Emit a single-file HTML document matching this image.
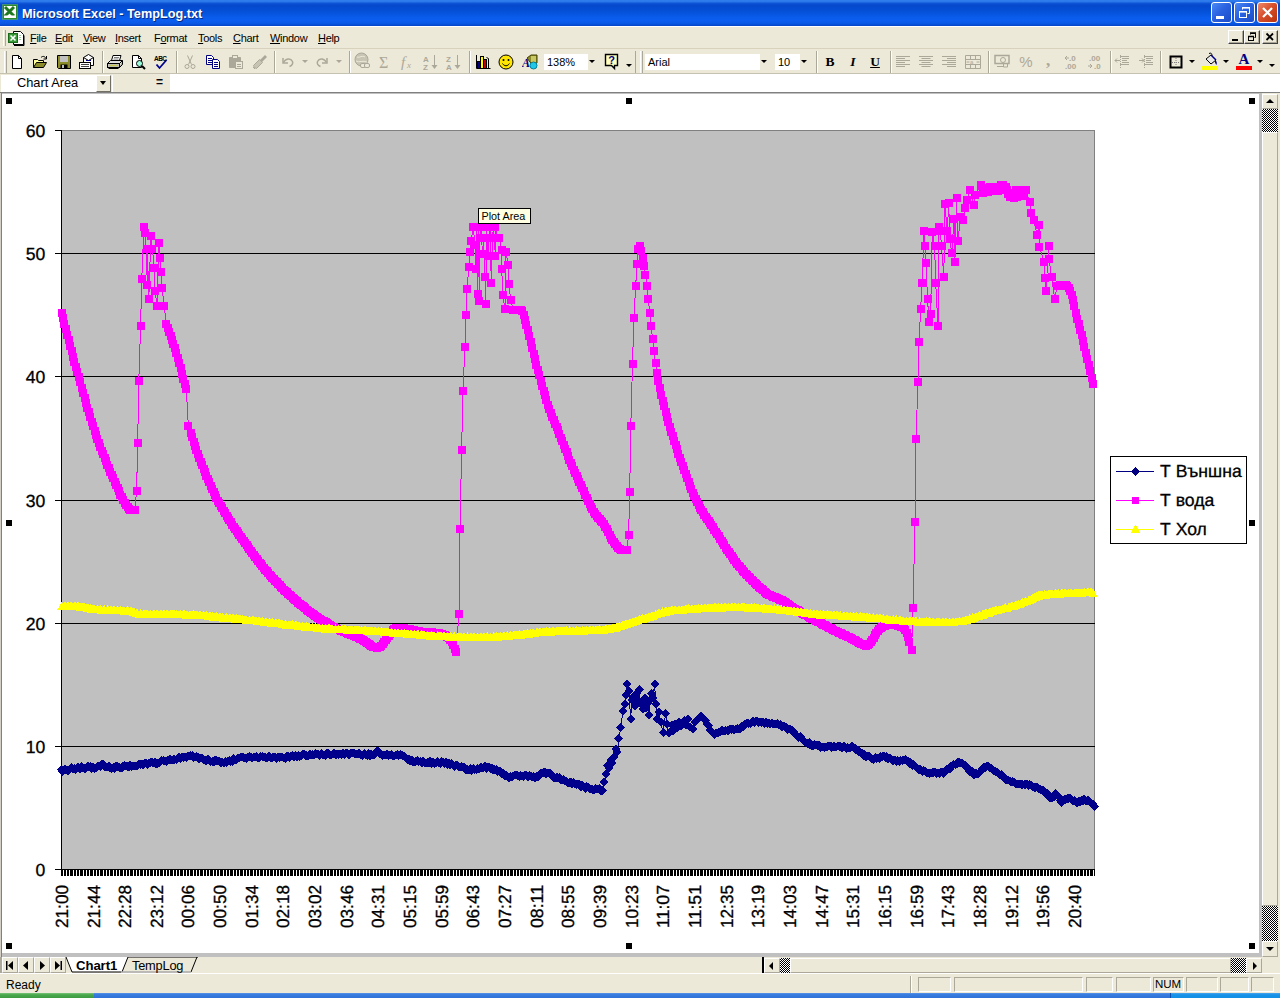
<!DOCTYPE html>
<html lang="en"><head><meta charset="utf-8"><title>Microsoft Excel - TempLog.txt</title>
<style>
*{box-sizing:border-box;margin:0;padding:0}
html,body{width:1280px;height:998px;overflow:hidden;background:#ece9d8}
body{position:relative;font-family:"Liberation Sans",Arial,sans-serif;font-size:11px;color:#000}
.abs{position:absolute}
#title{left:0;top:0;width:1280px;height:26px;background:linear-gradient(to bottom,#2f7fee 0,#2c78ea 6%,#0a50d4 14%,#0548cc 22%,#0450d6 42%,#0a5cec 68%,#0b5ef0 80%,#0a58e4 90%,#0646c6 100%)}
#title .t{left:22px;top:6px;color:#fff;font-weight:bold;font-size:12.7px;line-height:17px;white-space:nowrap;text-shadow:1px 1px 0 #0a2a80;letter-spacing:0}
.wb{top:2px;width:21px;height:21px;border:1px solid #fff;border-radius:3px;background:linear-gradient(135deg,#4a8af6 0,#2a62e0 45%,#1c4cc8 100%)}
.wb.x{background:linear-gradient(135deg,#ec8a6c 0,#d8502c 45%,#b8330f 100%)}
#menu{left:0;top:26px;width:1280px;height:22px;background:#ece9d8;border-top:1px solid #fff}
#menu span{position:absolute;top:5px;font-size:11px;line-height:13px;white-space:nowrap;letter-spacing:-.3px}
#menu u{text-decoration:underline;text-underline-offset:1px}
.mdi{top:30px;width:16px;height:14px;background:#ece9d8;border:1px solid;border-color:#fff #404040 #404040 #fff;box-shadow:inset -1px -1px 0 #aca899}
#tb{left:0;top:48px;width:1280px;height:26px;background:#ece9d8;border-top:1px solid #d8d2bd;border-bottom:1px solid #c5c2b2}
.sep{top:51px;width:2px;height:22px;border-left:1px solid #aca899;border-right:1px solid #fff}
.grip{top:51px;width:3px;height:22px;border-left:1px solid #fff;border-right:1px solid #aca899}
.ic{top:54px;width:16px;height:16px}
.box{top:54px;height:16px;background:#fff;font-size:11px;line-height:16px;padding-left:3px;white-space:nowrap}
.dd{width:0;height:0;border-left:3px solid transparent;border-right:3px solid transparent;border-top:3px solid #000}
#fb{left:0;top:74px;width:1280px;height:19px;background:#fff;border-bottom:1px solid #808080}
#chartwin{left:0;top:93px;width:1262px;height:864px;background:#c0c0c0}
#chartbg{left:2px;top:94px;width:1257px;height:859px;background:#fff}
#vs{left:1262px;top:93px;width:18px;height:864px;background:#ece9d8}
.chk{background-color:#fff;background-image:linear-gradient(45deg,#000 25%,transparent 25%,transparent 75%,#000 75%),linear-gradient(45deg,#000 25%,transparent 25%,transparent 75%,#000 75%);background-size:2px 2px;background-position:0 0,1px 1px}
.btn3{background:#ece9d8;border:1px solid;border-color:#fff #aca899 #aca899 #fff}
#tabs{left:0;top:957px;width:1280px;height:16px;background:#ece9d8}
#status{left:0;top:973px;width:1280px;height:21px;background:#ece9d8;border-top:1px solid #fff}
.pane{top:977px;height:15px;border:1px solid;border-color:#aca899 #fff #fff #aca899}
#task{left:0;top:993px;width:1280px;height:5px;background:linear-gradient(to bottom,#5b93e6 0,#3a7de0 30%,#2f71d6 100%)}
</style></head><body>
<div id="title" class="abs">
<svg class="abs" style="left:2px;top:4px" width="16" height="16" viewBox="0 0 16 16"><rect x=".5" y=".5" width="15" height="15" fill="#2d8a2d" stroke="#6db36d" stroke-dasharray="1 1"/><rect x="2" y="2" width="12" height="12" fill="#fff"/><path d="M3 3l9 9M12 3l-9 9" stroke="#1f7a1f" stroke-width="3"/><rect x="3" y="11.5" width="10" height="2" fill="#fff"/></svg>
<div class="abs t">Microsoft Excel - TempLog.txt</div>
<div class="abs wb" style="left:1211px"><div class="abs" style="left:4px;top:13px;width:8px;height:3px;background:#fff"></div></div>
<div class="abs wb" style="left:1234px"><svg class="abs" style="left:3px;top:3px" width="13" height="13" viewBox="0 0 13 13" fill="none" stroke="#fff"><path d="M4.5 3.5v-2h7v6h-2" stroke-width="1"/><path d="M4 1.8h8" stroke-width="1.6"/><rect x="1.5" y="5.5" width="7" height="6"/><path d="M1 5.8h8" stroke-width="1.6"/></svg></div>
<div class="abs wb x" style="left:1257px"><svg class="abs" style="left:3px;top:3px" width="13" height="13" viewBox="0 0 13 13"><path d="M2 2l9 9M11 2l-9 9" stroke="#fff" stroke-width="2.2"/></svg></div>
</div>
<div id="menu" class="abs">
<div class="abs grip" style="left:3px;top:3px;height:16px"></div>
<svg class="abs" style="left:8px;top:2px" width="17" height="17" viewBox="0 0 17 17"><path d="M5.500 2.500h7l3 3v10h-10z" fill="#fff" stroke="#000"/><path d="M6 16.500h10v-10" stroke="#000" stroke-width="1" fill="none"/><rect x=".5" y="4.500" width="9" height="9" fill="#3a9a3a" stroke="#1a6a1a"/><path d="M2.500 6.500l5 5M7.500 6.500l-5 5" stroke="#fff" stroke-width="1.600"/><path d="M11 6.500h2M11 8.500h2M11 10.500h2" stroke="#9c9"/></svg>
<span style="left:30px"><u>F</u>ile</span><span style="left:55px"><u>E</u>dit</span><span style="left:83px"><u>V</u>iew</span><span style="left:115px"><u>I</u>nsert</span><span style="left:154px">F<u>o</u>rmat</span><span style="left:198px"><u>T</u>ools</span><span style="left:233px"><u>C</u>hart</span><span style="left:270px"><u>W</u>indow</span><span style="left:318px"><u>H</u>elp</span>
</div>
<div class="abs mdi" style="left:1228px"><div class="abs" style="left:3px;top:8px;width:6px;height:2px;background:#000"></div></div>
<div class="abs mdi" style="left:1244px"><svg class="abs" style="left:1px;top:0" width="12" height="12" viewBox="0 0 12 12" fill="none" stroke="#000"><path d="M4.500 3.500v-1h5v4h-1"/><path d="M4 2h6" stroke-width="1.500"/><rect x="2.500" y="5.500" width="5" height="4"/><path d="M2 5.500h6" stroke-width="1.500"/></svg></div>
<div class="abs mdi" style="left:1262px"><svg class="abs" style="left:2px;top:1px" width="10" height="10" viewBox="0 0 10 10"><path d="M1.500 1.500l6.500 6.500M8 1.500l-6.500 6.500" stroke="#000" stroke-width="1.800"/></svg></div>
<div id="tb" class="abs"></div>
<div class="abs grip" style="left:4px"></div>
<!-- new -->
<svg class="abs ic" style="left:9px" viewBox="0 0 16 16"><path d="M3.500 1.500h6l3 3v10h-9z" fill="#fff" stroke="#000"/><path d="M9.500 1.500v3h3" fill="none" stroke="#000"/></svg>
<!-- open -->
<svg class="abs ic" style="left:32px" viewBox="0 0 16 16"><path d="M1.500 13.500v-8h4l1 1h5v2" fill="#ffff9c" stroke="#000"/><path d="M1.500 13.500l3-5h10l-3 5z" fill="#8c8c2a" stroke="#000"/><path d="M9 3.500c2-2 4-1 5 1M14.500 2v3h-3" fill="none" stroke="#000"/></svg>
<!-- save -->
<svg class="abs ic" style="left:56px" viewBox="0 0 16 16"><path d="M1.500 1.500h13v13h-12l-1-1z" fill="#8c8c2a" stroke="#000"/><rect x="4" y="2" width="8" height="6" fill="#c0c0c0"/><rect x="4.500" y="10.500" width="7" height="4" fill="#000"/><rect x="6" y="11" width="2" height="3" fill="#c0c0c0"/></svg>
<!-- mail -->
<svg class="abs ic" style="left:78px;width:18px" viewBox="0 0 18 16"><path d="M5.500 8.500v-5l5-3 5 3v8h-4" fill="#fff" stroke="#000"/><path d="M5.500 3.500l5 3 5-3" fill="none" stroke="#000"/><path d="M8 6.500h5" stroke="#000080"/><rect x="1.500" y="8.500" width="11" height="6" fill="#fff" stroke="#000"/><path d="M3 10.500h8M3 12.500h8" stroke="#404040"/></svg>
<div class="abs sep" style="left:102px"></div>
<!-- print -->
<svg class="abs ic" style="left:106px;width:18px" viewBox="0 0 18 16"><path d="M5.500 6.500l1.500-5h8l-1.500 5" fill="#fff" stroke="#000"/><path d="M8 3.500h5M7.500 5h5" stroke="#808080"/><path d="M1.500 9.500l3-3h12l-3 3z" fill="#e0e0e0" stroke="#000"/><rect x="1.500" y="9.500" width="12" height="4" fill="#c0c0c0" stroke="#000"/><path d="M13.500 13.500l3-3v-4" fill="#a0a0a0" stroke="#000"/><path d="M3 11.500h9" stroke="#c8c850" stroke-width="1.500"/><path d="M2.500 14.500h10" stroke="#000"/></svg>
<!-- preview -->
<svg class="abs ic" style="left:130px" viewBox="0 0 16 16"><path d="M2.500 1.500h6l3 3v9h-9z" fill="#fff" stroke="#000"/><path d="M8.500 1.500v3h3" fill="none" stroke="#000"/><circle cx="9.500" cy="9.500" r="3" fill="#9fd" stroke="#000"/><path d="M12 12l3 3" stroke="#000" stroke-width="2"/></svg>
<!-- spell -->
<svg class="abs ic" style="left:153px" viewBox="0 0 16 16"><text x="1" y="6.500" font-family="Liberation Sans,Arial,sans-serif" font-size="6.500" font-weight="bold" fill="#000" textLength="13">ABC</text><path d="M3.500 10.500l3 3.500 7-8" fill="none" stroke="#00008b" stroke-width="1.800"/></svg>
<div class="abs sep" style="left:176px"></div>
<!-- cut (disabled) -->
<svg class="abs ic" style="left:182px" viewBox="0 0 16 16" fill="none" stroke="#aca899"><path d="M5.500 1.500l4 9M10.500 1.500l-4 9"/><circle cx="5" cy="12.500" r="2"/><circle cx="11" cy="12.500" r="2"/></svg>
<!-- copy -->
<svg class="abs ic" style="left:205px" viewBox="0 0 16 16"><path d="M1.500 1.500h5l2 2v7h-7z" fill="#fff" stroke="#000080"/><path d="M3 4.500h4M3 6.500h4M3 8.500h4" stroke="#000080"/><path d="M7.500 5.500h5l2 2v7h-7z" fill="#fff" stroke="#000080"/><path d="M9 8.500h4M9 10.500h4M9 12.500h4" stroke="#000080"/></svg>
<!-- paste (disabled) -->
<svg class="abs ic" style="left:228px" viewBox="0 0 16 16"><path d="M1.500 3.500h11v10h-11z" fill="#aca899" stroke="#aca899"/><rect x="4.500" y="1.500" width="5" height="3" fill="#ece9d8" stroke="#aca899"/><rect x="7.500" y="7.500" width="7" height="7" fill="#ece9d8" stroke="#aca899"/><path d="M9 10.500h4M9 12.500h4" stroke="#aca899"/></svg>
<!-- painter (disabled) -->
<svg class="abs ic" style="left:251px" viewBox="0 0 16 16"><path d="M14 1l-5 5 2 2 5-5z" fill="#aca899"/><path d="M8.500 5.500l3 3-6 6-2-1-1-2z" fill="#c8c4b4" stroke="#aca899"/><path d="M2 13l2 2" stroke="#aca899"/></svg>
<div class="abs sep" style="left:274px"></div>
<!-- undo -->
<svg class="abs ic" style="left:280px" viewBox="0 0 16 16" fill="none" stroke="#aca899" stroke-width="1.500"><path d="M3 4v5h5"/><path d="M3.500 8.500c2-4 7-5 9-1 .8 2-.5 4-3 5"/></svg>
<div class="abs dd" style="left:302px;top:60px;border-top-color:#aca899"></div>
<!-- redo -->
<svg class="abs ic" style="left:314px" viewBox="0 0 16 16" fill="none" stroke="#aca899" stroke-width="1.500"><path d="M13 4v5h-5"/><path d="M12.500 8.500c-2-4-7-5-9-1-.8 2 .5 4 3 5"/></svg>
<div class="abs dd" style="left:336px;top:60px;border-top-color:#aca899"></div>
<div class="abs sep" style="left:349px"></div>
<!-- hyperlink -->
<svg class="abs ic" style="left:354px;width:18px;height:18px;top:52px" viewBox="0 0 18 18"><circle cx="7.500" cy="7.500" r="6.500" fill="#c8c4b4" stroke="#aca899"/><path d="M3 5c3 1 5-2 8 0M2 9c3 2 7-1 11 1" stroke="#ece9d8" fill="none"/><rect x="6.500" y="11.500" width="5" height="4" rx="1.500" fill="#ece9d8" stroke="#aca899"/><rect x="10.500" y="11.500" width="5" height="4" rx="1.500" fill="#ece9d8" stroke="#aca899"/></svg>
<!-- sigma -->
<svg class="abs ic" style="left:377px" viewBox="0 0 16 16"><text x="2" y="14" font-family="Liberation Serif,serif" font-size="16" fill="#aca899">Σ</text></svg>
<!-- fx -->
<svg class="abs ic" style="left:400px" viewBox="0 0 16 16"><text x="1" y="13" font-family="Liberation Serif,serif" font-style="italic" font-size="15" fill="#aca899">f</text><text x="7" y="14" font-family="Liberation Serif,serif" font-style="italic" font-size="9" fill="#aca899">x</text></svg>
<!-- sort asc -->
<svg class="abs ic" style="left:423px" viewBox="0 0 16 16"><text x="0" y="7.500" font-family="Liberation Sans,Arial,sans-serif" font-size="8" font-weight="bold" fill="#aca899">A</text><text x="0" y="15.500" font-family="Liberation Sans,Arial,sans-serif" font-size="8" font-weight="bold" fill="#aca899">Z</text><path d="M11.500 1v11" stroke="#aca899"/><path d="M8.500 11h6l-3 4z" fill="#aca899"/></svg>
<!-- sort desc -->
<svg class="abs ic" style="left:446px" viewBox="0 0 16 16"><text x="0" y="7.500" font-family="Liberation Sans,Arial,sans-serif" font-size="8" font-weight="bold" fill="#aca899">Z</text><text x="0" y="15.500" font-family="Liberation Sans,Arial,sans-serif" font-size="8" font-weight="bold" fill="#aca899">A</text><path d="M11.500 1v11" stroke="#aca899"/><path d="M8.500 11h6l-3 4z" fill="#aca899"/></svg>
<div class="abs sep" style="left:469px"></div>
<!-- chart wizard -->
<svg class="abs ic" style="left:475px" viewBox="0 0 16 16"><path d="M1.500 1v13.500h14" fill="none" stroke="#000"/><rect x="2.500" y="7.500" width="3" height="7" fill="#000080" stroke="#000"/><rect x="5.500" y="2.500" width="3" height="12" fill="#ffff00" stroke="#000"/><rect x="8.500" y="5.500" width="3" height="9" fill="#c00000" stroke="#000"/><path d="M11.500 3.500l2 1v10" stroke="#000" fill="none"/></svg>
<!-- smiley -->
<svg class="abs ic" style="left:498px" viewBox="0 0 16 16"><circle cx="8" cy="8" r="7" fill="#ffe600" stroke="#000"/><circle cx="5.500" cy="6" r="1" fill="#000"/><circle cx="10.500" cy="6" r="1" fill="#000"/><path d="M4.500 9.500c2 3 5 3 7 0" fill="none" stroke="#000"/></svg>
<!-- drawing -->
<svg class="abs ic" style="left:522px;width:18px" viewBox="0 0 18 16"><path d="M5 4l4-3h6v8l-4 3z" fill="#8c8c2a" stroke="#404000"/><rect x="9" y="2" width="5" height="6" fill="#c8c864"/><circle cx="11.500" cy="11.500" r="3.500" fill="#20c8e8" stroke="#0080a0"/><text x="0" y="13" font-family="Liberation Serif,serif" font-size="12" font-style="italic" font-weight="bold" fill="#000080">A</text></svg>
<div class="abs box" style="left:544px;width:45px">138%</div>
<div class="abs" style="left:588px;top:52px;width:11px;height:19px;background:#ece9d8"></div>
<div class="abs dd" style="left:589px;top:60px"></div>
<!-- help -->
<svg class="abs ic" style="left:604px;width:17px;height:18px;top:53px" viewBox="0 0 17 18"><path d="M1.500 1.500h12v11h-3v3l-3-3h-6z" fill="#ffffc0" stroke="#000" stroke-width="1.400"/><text x="4.200" y="11" font-family="Liberation Sans,Arial,sans-serif" font-size="11" font-weight="bold" fill="#000080">?</text></svg>
<div class="abs dd" style="left:626px;top:64px"></div>
<div class="abs sep" style="left:635px;border-right:0"></div>
<div class="abs grip" style="left:640px"></div>
<div class="abs box" style="left:645px;width:115px">Arial</div>
<div class="abs dd" style="left:761px;top:60px"></div>
<div class="abs box" style="left:775px;width:25px">10</div>
<div class="abs dd" style="left:801px;top:60px"></div>
<div class="abs sep" style="left:816px"></div>
<div class="abs" style="left:823px;top:53px;width:14px;font:bold 13.5px/18px 'Liberation Serif',serif;text-align:center">B</div>
<div class="abs" style="left:846px;top:53px;width:14px;font:italic bold 13.5px/18px 'Liberation Serif',serif;text-align:center">I</div>
<div class="abs" style="left:868px;top:53px;width:14px;font:bold 13.5px/17px 'Liberation Serif',serif;text-align:center;text-decoration:underline">U</div>
<div class="abs sep" style="left:890px"></div>
<svg class="abs ic" style="left:895px" viewBox="0 0 16 16" stroke="#aca899"><path d="M1 2.500h14M1 4.500h9M1 6.500h14M1 8.500h9M1 10.500h14M1 12.500h9"/></svg>
<svg class="abs ic" style="left:918px" viewBox="0 0 16 16" stroke="#aca899"><path d="M1 2.500h14M3.500 4.500h9M1 6.500h14M3.500 8.500h9M1 10.500h14M3.500 12.500h9"/></svg>
<svg class="abs ic" style="left:941px" viewBox="0 0 16 16" stroke="#aca899"><path d="M1 2.500h14M6 4.500h9M1 6.500h14M6 8.500h9M1 10.500h14M6 12.500h9"/></svg>
<svg class="abs ic" style="left:965px" viewBox="0 0 16 16" fill="none" stroke="#aca899"><path d="M.5 1.500h15v13h-15zM.5 5.500h15M.5 10.500h15M5.500 1.500v4M10.500 1.500v4M5.500 10.500v4M10.500 10.500v4"/><text x="5" y="10" font-family="Liberation Sans,Arial,sans-serif" font-size="6" fill="#aca899" stroke="none">a</text><path d="M1.500 8h3M11.500 8h3"/></svg>
<div class="abs sep" style="left:988px"></div>
<svg class="abs ic" style="left:994px" viewBox="0 0 16 16" fill="none" stroke="#aca899"><rect x="1" y="1.500" width="14" height="8" stroke-width="1.500"/><circle cx="9" cy="6" r="2.500"/><path d="M3 12.500h6M9.500 9v4h4v-3"/></svg>
<div class="abs" style="left:1018px;top:52px;width:16px;font:15px/19px 'Liberation Sans',Arial,sans-serif;color:#aca899;text-align:center">%</div>
<div class="abs" style="left:1041px;top:51px;width:14px;font:bold 17px/19px 'Liberation Serif',serif;color:#aca899;text-align:center">,</div>
<svg class="abs ic" style="left:1064px" viewBox="0 0 16 16"><text x="5" y="7" font-family="Liberation Sans,Arial,sans-serif" font-size="8" font-weight="bold" fill="#aca899">.0</text><text x="1" y="15" font-family="Liberation Sans,Arial,sans-serif" font-size="8" font-weight="bold" fill="#aca899">.00</text><path d="M1 4h4M1 4l2-2M1 4l2 2" stroke="#aca899" fill="none"/></svg>
<svg class="abs ic" style="left:1087px" viewBox="0 0 16 16"><text x="2" y="7" font-family="Liberation Sans,Arial,sans-serif" font-size="8" font-weight="bold" fill="#aca899">.00</text><text x="7" y="15" font-family="Liberation Sans,Arial,sans-serif" font-size="8" font-weight="bold" fill="#aca899">.0</text><path d="M1 12h4M5 12l-2-2M5 12l-2 2" stroke="#aca899" fill="none"/></svg>
<div class="abs sep" style="left:1110px"></div>
<svg class="abs ic" style="left:1114px" viewBox="0 0 16 16" stroke="#aca899" fill="none"><path d="M6 2.500h9M8 4.500h7M8 6.500h5M8 8.500h7M6 10.500h9"/><path d="M1 6.500h5M1 6.500l2-2M1 6.500l2 2"/><path d="M6.500 1v14" stroke-dasharray="1 1"/></svg>
<svg class="abs ic" style="left:1138px" viewBox="0 0 16 16" stroke="#aca899" fill="none"><path d="M6 2.500h9M8 4.500h7M8 6.500h5M8 8.500h7M6 10.500h9"/><path d="M1 6.500h5M6 6.500l-2-2M6 6.500l-2 2"/><path d="M6.500 1v14" stroke-dasharray="1 1"/></svg>
<div class="abs sep" style="left:1160px"></div>
<svg class="abs ic" style="left:1169px" viewBox="0 0 16 16" fill="none"><rect x="1.500" y="2.500" width="11" height="11" stroke="#000" stroke-width="2"/><path d="M7 4v9M3 8.500h9" stroke="#808080" stroke-dasharray="1 1"/></svg>
<div class="abs dd" style="left:1189px;top:60px"></div>
<svg class="abs ic" style="left:1201px;top:52px;height:19px;width:18px" viewBox="0 0 18 19"><path d="M5 7l5-4 5 5-5 4z" fill="#e8e8e8" stroke="#000"/><path d="M8 1.500c2-1 3 0 3 2.500" fill="none" stroke="#000"/><path d="M14 8c2 1 2 3 1.500 5-1-1-2-3-1.500-5z" fill="#000080"/><path d="M10 3l5 5" stroke="#000080" stroke-width="1.500"/><rect x="1" y="14" width="16" height="4" fill="#ffff00"/></svg>
<div class="abs dd" style="left:1223px;top:60px"></div>
<div class="abs" style="left:1236px;top:51px;width:16px;font:bold 15px/17px 'Liberation Serif',serif;color:#000080;text-align:center">A</div>
<div class="abs" style="left:1236px;top:66px;width:16px;height:4px;background:#f00"></div>
<div class="abs dd" style="left:1257px;top:60px"></div>
<div class="abs dd" style="left:1269px;top:64px"></div>
<!-- formula bar -->
<div id="fb" class="abs"></div>
<div class="abs" style="left:0;top:74px;width:170px;height:19px;background:#ece9d8;border-bottom:1px solid #808080"></div>
<div class="abs" style="left:1px;top:75px;width:95px;height:17px;background:#fff;font:12.8px/16px 'Liberation Sans',Arial,sans-serif;padding-left:16px;white-space:nowrap">Chart Area</div>
<div class="abs btn3" style="left:96px;top:75px;width:15px;height:17px;border-color:#fff #716f64 #716f64 #fff"><div class="abs dd" style="left:3px;top:5px;border-width:4px 4px 0 4px;border-left-width:3.500px;border-right-width:3.500px"></div></div>
<div class="abs" style="left:112px;top:75px;width:1px;height:17px;background:#fff"></div>
<div class="abs" style="left:156px;top:74px;font:bold 12px/17px 'Liberation Sans',Arial,sans-serif">=</div>
<div id="chartwin" class="abs"></div>
<div class="abs" style="left:0;top:93px;width:1px;height:864px;background:#d4d0c8"></div><div class="abs" style="left:1px;top:93px;width:1px;height:864px;background:#808080"></div>
<div id="chartbg" class="abs"></div>
<svg id="chart" width="1257" height="859" viewBox="2 94 1257 859" style="position:absolute;left:2px;top:94px" shape-rendering="crispEdges">
<defs>
<marker id="mD" markerWidth="10" markerHeight="10" refX="5" refY="5" markerUnits="userSpaceOnUse"><path d="M5 0.5 L9.5 5 L5 9.5 L0.5 5Z" fill="#00008c"/></marker>
<marker id="mS" markerWidth="8" markerHeight="8" refX="4" refY="4" markerUnits="userSpaceOnUse"><rect x="0" y="0" width="8" height="8" fill="#ff00ff"/></marker>
<marker id="mT" markerWidth="10" markerHeight="10" refX="5" refY="5" markerUnits="userSpaceOnUse"><path d="M5 0.8 L9.3 9 L0.7 9Z" fill="#ffff00"/></marker>
<pattern id="tk" width="10" height="7" patternUnits="userSpaceOnUse" x="61"><rect x="0" y="0" width="2" height="7" fill="#000"/><rect x="3" y="0" width="2" height="7" fill="#000"/><rect x="6" y="0" width="2" height="7" fill="#000"/><rect x="9" y="0" width="1" height="7" fill="#000"/></pattern>
</defs>
<rect x="62" y="130" width="1033" height="739" fill="#c0c0c0"/>
<path d="M61.5 130.5H1094.5V869" fill="none" stroke="#808080" stroke-width="1"/>
<rect x="62" y="253" width="1033" height="1" fill="#000"/>
<rect x="62" y="376" width="1033" height="1" fill="#000"/>
<rect x="62" y="500" width="1033" height="1" fill="#000"/>
<rect x="62" y="623" width="1033" height="1" fill="#000"/>
<rect x="62" y="746" width="1033" height="1" fill="#000"/>
<rect x="61" y="130" width="1" height="740" fill="#000"/>
<rect x="55" y="869" width="1040" height="1" fill="#000"/>
<rect x="55" y="130" width="6" height="1" fill="#000"/>
<rect x="55" y="253" width="6" height="1" fill="#000"/>
<rect x="55" y="376" width="6" height="1" fill="#000"/>
<rect x="55" y="500" width="6" height="1" fill="#000"/>
<rect x="55" y="623" width="6" height="1" fill="#000"/>
<rect x="55" y="746" width="6" height="1" fill="#000"/>
<rect x="61" y="870" width="1034" height="6" fill="url(#tk)"/>
<polyline fill="none" stroke="#00008c" stroke-width="1" marker-start="url(#mD)" marker-mid="url(#mD)" marker-end="url(#mD)" points="61.5,769.6 62.9,771.6 64.4,769.4 65.8,769.5 67.2,770.5 68.7,770.3 70.1,769.0 71.5,767.8 73.0,768.6 74.4,768.2 75.8,769.4 77.3,767.4 78.7,767.7 80.2,769.0 81.6,766.7 83.0,767.7 84.5,768.7 85.9,768.5 87.3,766.6 88.8,766.6 90.2,766.6 91.6,768.8 93.1,766.9 94.5,768.1 95.9,768.3 97.4,766.7 98.8,766.0 100.2,766.4 101.7,764.4 103.1,764.0 104.5,767.0 106.0,767.0 107.4,766.9 108.8,766.2 110.3,768.1 111.7,768.4 113.1,767.6 114.6,768.3 116.0,765.8 117.5,766.3 118.9,766.8 120.3,767.9 121.8,767.8 123.2,766.2 124.6,765.7 126.1,766.0 127.5,766.1 128.9,767.0 130.4,765.0 131.8,766.4 133.2,766.1 134.7,766.2 136.1,765.9 137.5,765.3 139.0,764.4 140.4,764.2 141.8,764.1 143.3,765.0 144.7,763.0 146.1,763.1 147.6,764.4 149.0,762.9 150.5,762.2 151.9,761.9 153.3,763.1 154.8,762.3 156.2,763.8 157.6,763.3 159.1,763.4 160.5,761.3 161.9,760.6 163.4,760.4 164.8,761.2 166.2,761.4 167.7,760.4 169.1,759.5 170.5,759.7 172.0,759.9 173.4,759.7 174.8,759.6 176.3,759.5 177.7,758.7 179.1,757.0 180.6,758.6 182.0,756.9 183.4,757.4 184.9,756.7 186.3,757.5 187.8,755.9 189.2,755.9 190.6,755.9 192.1,755.6 193.5,757.6 194.9,756.9 196.4,756.5 197.8,757.0 199.2,759.0 200.7,758.1 202.1,757.8 203.5,759.7 205.0,759.7 206.4,761.0 207.8,758.9 209.3,760.2 210.7,761.3 212.1,761.6 213.6,762.1 215.0,760.1 216.4,760.9 217.9,760.7 219.3,761.0 220.8,763.2 222.2,762.2 223.6,763.1 225.1,761.6 226.5,762.6 227.9,761.3 229.4,760.4 230.8,761.4 232.2,761.4 233.7,758.8 235.1,759.7 236.5,759.3 238.0,757.9 239.4,758.0 240.8,757.2 242.3,757.2 243.7,757.3 245.1,758.2 246.6,758.2 248.0,757.0 249.4,756.5 250.9,757.3 252.3,758.2 253.7,756.9 255.2,757.2 256.6,756.9 258.1,758.4 259.5,757.8 260.9,756.5 262.4,756.6 263.8,757.3 265.2,757.7 266.7,758.0 268.1,756.5 269.5,756.7 271.0,758.1 272.4,757.3 273.8,757.0 275.3,757.0 276.7,758.6 278.1,756.9 279.6,757.5 281.0,756.9 282.4,757.0 283.9,758.1 285.3,758.3 286.7,756.5 288.2,756.0 289.6,757.3 291.1,755.8 292.5,755.1 293.9,757.3 295.4,755.9 296.8,756.8 298.2,755.6 299.7,756.8 301.1,755.5 302.5,754.6 304.0,754.1 305.4,755.4 306.8,755.6 308.3,756.2 309.7,753.9 311.1,755.3 312.6,754.5 314.0,754.8 315.4,753.8 316.9,754.1 318.3,754.6 319.7,755.6 321.2,753.4 322.6,754.4 324.1,755.1 325.5,755.5 326.9,753.4 328.4,753.2 329.8,755.2 331.2,755.3 332.7,753.9 334.1,752.8 335.5,755.0 337.0,753.6 338.4,754.9 339.8,754.1 341.3,754.6 342.7,752.9 344.1,754.5 345.6,753.0 347.0,753.5 348.4,754.6 349.9,754.6 351.3,752.9 352.7,753.1 354.2,753.6 355.6,754.0 357.0,753.7 358.5,753.2 359.9,753.6 361.4,755.0 362.8,755.5 364.2,753.4 365.7,754.9 367.1,755.5 368.5,753.7 370.0,755.8 371.4,754.0 372.8,755.3 374.3,754.5 375.7,753.1 377.1,751.1 378.6,751.8 380.0,753.7 381.4,754.6 382.9,755.5 384.3,755.0 385.7,755.1 387.2,754.0 388.6,755.6 390.0,755.3 391.5,754.7 392.9,756.1 394.4,756.1 395.8,755.3 397.2,754.7 398.7,755.5 400.1,754.6 401.5,755.0 403.0,756.4 404.4,756.4 405.8,758.3 407.3,759.4 408.7,759.0 410.1,761.2 411.6,760.0 413.0,761.9 414.4,762.1 415.9,761.6 417.3,760.5 418.7,761.8 420.2,761.5 421.6,763.1 423.0,761.0 424.5,762.9 425.9,763.3 427.3,762.7 428.8,762.9 430.2,761.3 431.7,763.4 433.1,762.2 434.5,763.4 436.0,763.4 437.4,761.5 438.8,763.2 440.3,763.6 441.7,761.4 443.1,762.3 444.6,763.6 446.0,762.3 447.4,764.5 448.9,763.2 450.3,765.0 451.7,763.7 453.2,765.0 454.6,766.6 456.0,765.2 457.5,765.8 458.9,766.9 460.3,766.9 461.8,766.6 463.2,767.3 464.7,767.7 466.1,770.0 467.5,769.6 469.0,770.4 470.4,768.7 471.8,770.4 473.3,768.7 474.7,769.6 476.1,769.5 477.6,768.3 479.0,769.1 480.4,767.8 481.9,767.5 483.3,768.0 484.7,766.0 486.2,768.4 487.6,767.7 489.0,767.4 490.5,768.8 491.9,767.8 493.3,770.2 494.8,769.6 496.2,769.6 497.6,771.3 499.1,771.3 500.5,771.6 502.0,774.0 503.4,773.1 504.8,776.0 506.3,775.2 507.7,776.8 509.1,777.9 510.6,776.9 512.0,777.1 513.4,776.1 514.9,775.2 516.3,775.1 517.7,775.3 519.2,776.4 520.6,775.8 522.0,776.0 523.5,776.9 524.9,775.0 526.3,775.5 527.8,776.9 529.2,775.7 530.6,776.0 532.1,777.3 533.5,776.9 535.0,777.6 536.4,776.9 537.8,776.8 539.3,775.4 540.7,773.1 542.1,773.2 543.6,772.4 545.0,771.7 546.4,774.1 547.9,772.8 549.3,773.1 550.7,773.7 552.2,775.8 553.6,777.2 555.0,777.7 556.5,777.3 557.9,777.5 559.3,777.4 560.8,779.6 562.2,779.9 563.6,779.8 565.1,781.1 566.5,781.1 567.9,782.8 569.4,782.8 570.8,782.0 572.3,784.2 573.7,782.4 575.1,784.1 576.6,784.3 578.0,784.3 579.4,784.4 580.9,786.7 582.3,785.2 583.7,787.0 585.2,788.5 586.6,786.8 588.0,787.3 589.5,788.7 590.9,788.8 592.3,789.4 593.8,790.1 595.2,788.6 596.6,789.0 598.1,789.1 599.5,788.6 600.9,790.9 602.4,790.7 604.4,782.0 606.0,774.0 607.0,765.5 609.0,768.0 610.5,760.0 612.0,763.0 613.7,757.0 616.0,749.4 617.4,752.0 618.8,738.7 620.8,727.5 623.0,710.6 625.0,703.6 626.4,695.0 627.0,684.0 629.0,691.0 630.6,719.0 632.0,700.0 633.4,696.6 635.0,706.0 636.5,693.0 638.0,700.0 639.0,689.5 640.5,704.0 641.8,702.0 643.0,709.0 644.5,698.0 646.0,708.0 647.5,703.0 648.9,714.8 650.3,700.0 651.7,693.7 653.0,698.0 654.5,684.0 656.0,703.6 657.0,719.0 659.0,712.0 660.5,722.0 663.0,732.5 665.7,713.4 667.0,724.0 668.5,733.0 670.0,731.7 671.5,725.0 673.0,731.0 674.5,724.0 677.0,727.5 679.0,722.0 681.0,726.0 684.0,720.5 686.0,725.0 688.0,719.0 690.0,727.0 692.5,729.0 695.0,722.0 698.0,719.0 701.0,716.0 703.0,718.0 705.0,720.5 707.1,724.3 708.5,725.2 710.0,729.7 711.4,731.7 712.9,732.8 714.3,734.4 715.7,733.8 717.2,733.0 718.6,732.2 720.0,731.8 721.5,730.6 722.9,730.6 724.3,731.0 725.8,730.5 727.2,730.7 728.6,730.2 730.1,729.1 731.5,729.7 732.9,729.4 734.4,730.1 735.8,729.3 737.2,728.5 738.7,728.9 740.1,728.9 741.5,726.3 743.0,727.1 744.4,724.2 745.9,724.0 747.3,723.1 748.7,723.6 750.2,723.5 751.6,722.5 753.0,721.2 754.5,722.5 755.9,721.2 757.3,721.0 758.8,722.7 760.2,722.1 761.6,722.3 763.1,722.4 764.5,723.3 765.9,722.2 767.4,723.3 768.8,723.2 770.2,723.8 771.7,723.1 773.1,724.1 774.5,724.0 776.0,723.8 777.4,723.9 778.9,725.4 780.3,724.6 781.7,727.1 783.2,725.9 784.6,726.2 786.0,727.1 787.5,729.8 788.9,729.2 790.3,729.7 791.8,730.3 793.2,731.4 794.6,734.0 796.1,735.0 797.5,736.2 798.9,737.5 800.4,736.9 801.8,739.3 803.2,739.8 804.7,741.8 806.1,742.8 807.5,743.8 809.0,742.5 810.4,745.1 811.8,745.7 813.3,746.2 814.7,744.6 816.2,745.2 817.6,745.2 819.0,745.2 820.5,747.4 821.9,747.4 823.3,747.1 824.8,747.6 826.2,747.2 827.6,746.4 829.1,746.0 830.5,746.0 831.9,747.6 833.4,746.3 834.8,746.6 836.2,746.9 837.7,745.9 839.1,746.5 840.5,746.6 842.0,747.6 843.4,746.8 844.8,746.7 846.3,748.3 847.7,747.3 849.2,748.2 850.6,747.7 852.0,746.3 853.5,747.5 854.9,748.1 856.3,749.9 857.8,750.0 859.2,752.1 860.6,752.9 862.1,753.3 863.5,755.8 864.9,754.6 866.4,757.1 867.8,756.1 869.2,756.3 870.7,757.3 872.1,759.0 873.5,759.8 875.0,757.5 876.4,758.5 877.8,758.1 879.3,758.3 880.7,756.3 882.1,756.6 883.6,756.1 885.0,757.5 886.5,756.5 887.9,758.8 889.3,757.9 890.8,758.5 892.2,760.4 893.6,760.6 895.1,760.2 896.5,761.8 897.9,760.5 899.4,761.7 900.8,760.7 902.2,760.4 903.7,759.9 905.1,759.6 906.5,760.4 908.0,761.2 909.4,763.4 910.8,762.6 912.3,765.7 913.7,764.8 915.1,766.2 916.6,767.2 918.0,769.5 919.5,769.2 920.9,769.6 922.3,771.5 923.8,770.6 925.2,771.7 926.6,772.4 928.1,773.3 929.5,773.5 930.9,773.4 932.4,772.6 933.8,772.6 935.2,772.2 936.7,773.8 938.1,773.4 939.5,773.6 941.0,772.2 942.4,772.9 943.8,773.4 945.3,772.1 946.7,769.8 948.1,769.2 949.6,769.0 951.0,766.4 952.4,765.3 953.9,764.6 955.3,764.7 956.8,764.3 958.2,762.2 959.6,762.2 961.1,762.8 962.5,763.8 963.9,765.3 965.4,765.7 966.8,767.4 968.2,768.5 969.7,771.7 971.1,772.3 972.5,771.9 974.0,774.7 975.4,773.0 976.8,773.6 978.3,774.2 979.7,772.5 981.1,770.9 982.6,768.7 984.0,767.0 985.4,767.4 986.9,766.1 988.3,766.8 989.8,767.9 991.2,767.8 992.6,769.5 994.1,771.3 995.5,771.9 996.9,772.4 998.4,773.8 999.8,774.4 1001.2,774.7 1002.7,776.8 1004.1,777.3 1005.5,779.1 1007.0,780.4 1008.4,780.1 1009.8,781.1 1011.3,782.1 1012.7,781.8 1014.1,781.8 1015.6,783.3 1017.0,784.0 1018.4,784.0 1019.9,784.0 1021.3,784.6 1022.7,784.4 1024.2,784.6 1025.6,784.4 1027.1,784.3 1028.5,785.5 1029.9,784.6 1031.4,785.8 1032.8,787.1 1034.2,787.4 1035.7,787.7 1037.1,787.3 1038.5,788.2 1040.0,788.9 1041.4,790.0 1042.8,790.3 1044.3,791.8 1045.7,793.8 1047.1,793.6 1048.6,796.3 1050.0,797.9 1051.4,797.7 1052.9,797.6 1054.3,797.1 1055.7,793.6 1057.2,795.5 1058.6,796.6 1060.1,800.5 1061.5,802.4 1062.9,801.4 1064.4,799.6 1065.8,799.7 1067.2,798.7 1068.7,798.5 1070.1,798.2 1071.5,799.2 1073.0,800.6 1074.4,800.8 1075.8,801.4 1077.3,803.1 1078.7,801.1 1080.1,801.8 1081.6,800.5 1083.0,800.9 1084.4,799.1 1085.9,801.4 1087.3,800.5 1088.7,800.8 1090.2,802.4 1091.6,804.0 1093.0,804.3 1094.5,806.4"/>
<polyline fill="none" stroke="#ff00ff" stroke-width="1" marker-start="url(#mS)" marker-mid="url(#mS)" marker-end="url(#mS)" points="61.5,313.0 62.9,318.4 64.4,323.9 65.8,329.3 67.2,334.8 68.7,340.3 70.1,345.7 71.5,351.1 73.0,356.5 74.4,361.7 75.8,367.0 77.3,372.1 78.7,377.3 80.2,382.4 81.6,387.5 83.0,392.6 84.5,397.7 85.9,402.6 87.3,407.5 88.8,412.4 90.2,417.1 91.6,421.7 93.1,426.2 94.5,430.5 95.9,434.7 97.4,438.8 98.8,442.8 100.2,446.7 101.7,450.5 103.1,454.2 104.5,457.8 106.0,461.4 107.4,464.9 108.8,468.3 110.3,471.7 111.7,475.0 113.1,478.4 114.6,481.7 116.0,485.0 117.5,488.2 118.9,491.4 120.3,494.5 121.8,497.4 123.2,500.2 124.6,502.8 126.1,505.2 127.5,507.3 128.9,509.1 130.4,509.9 131.8,510.0 133.2,510.0 134.7,510.0 136.6,491.0 137.7,442.5 138.8,380.5 140.6,325.7 141.8,278.6 143.9,227.0 145.3,233.0 147.4,285.0 147.4,249.0 148.8,299.0 150.9,236.0 152.3,249.0 154.4,268.0 155.0,291.0 157.2,306.0 158.6,243.0 160.0,257.5 160.7,271.6 162.1,288.4 164.2,306.0 166.2,323.9 167.7,327.8 169.1,331.7 170.5,335.7 172.0,339.7 173.4,343.9 174.8,348.4 176.3,353.0 177.7,357.9 179.1,363.0 180.6,368.2 182.0,373.5 183.4,378.8 184.9,384.0 186.3,389.3 188.3,425.5 190.6,432.5 192.1,437.0 193.5,441.6 194.9,446.0 196.4,450.3 197.8,454.4 199.2,458.3 200.7,461.8 202.1,465.2 203.5,468.7 205.0,472.2 206.4,475.6 207.8,479.0 209.3,482.4 210.7,485.7 212.1,488.9 213.6,492.0 215.0,495.0 216.4,497.9 217.9,500.6 219.3,503.3 220.8,505.9 222.2,508.4 223.6,510.8 225.1,513.2 226.5,515.6 227.9,517.9 229.4,520.1 230.8,522.3 232.2,524.5 233.7,526.7 235.1,528.8 236.5,530.9 238.0,533.0 239.4,535.1 240.8,537.2 242.3,539.3 243.7,541.3 245.1,543.4 246.6,545.4 248.0,547.4 249.4,549.3 250.9,551.3 252.3,553.2 253.7,555.1 255.2,557.0 256.6,558.8 258.1,560.7 259.5,562.5 260.9,564.2 262.4,566.0 263.8,567.7 265.2,569.5 266.7,571.2 268.1,572.8 269.5,574.5 271.0,576.1 272.4,577.7 273.8,579.3 275.3,580.8 276.7,582.3 278.1,583.8 279.6,585.3 281.0,586.7 282.4,588.1 283.9,589.5 285.3,590.9 286.7,592.3 288.2,593.6 289.6,594.9 291.1,596.2 292.5,597.5 293.9,598.8 295.4,600.1 296.8,601.3 298.2,602.5 299.7,603.7 301.1,604.9 302.5,606.1 304.0,607.2 305.4,608.4 306.8,609.5 308.3,610.6 309.7,611.6 311.1,612.7 312.6,613.7 314.0,614.8 315.4,615.8 316.9,616.8 318.3,617.7 319.7,618.7 321.2,619.6 322.6,620.5 324.1,621.4 325.5,622.3 326.9,623.2 328.4,624.0 329.8,624.9 331.2,625.7 332.7,626.5 334.1,627.2 335.5,627.9 337.0,628.6 338.4,629.3 339.8,629.9 341.3,630.5 342.7,631.1 344.1,631.7 345.6,632.3 347.0,632.9 348.4,633.5 349.9,634.1 351.3,634.6 352.7,635.2 354.2,635.8 355.6,636.5 357.0,637.1 358.5,637.8 359.9,638.5 361.4,639.2 362.8,640.1 364.2,641.1 365.7,642.1 367.1,643.1 368.5,644.1 370.0,645.0 371.4,645.8 372.8,646.5 374.3,647.1 375.7,647.4 377.1,647.5 378.6,647.3 380.0,646.7 381.4,645.6 382.9,644.0 384.3,642.1 385.7,640.1 387.2,638.3 388.6,636.3 390.0,634.1 391.5,631.9 392.9,630.0 394.4,628.6 395.8,628.0 397.2,628.0 398.7,628.0 400.1,628.1 401.5,628.1 403.0,628.2 404.4,628.3 405.8,628.5 407.3,628.7 408.7,629.0 410.1,629.3 411.6,629.6 413.0,630.0 414.4,630.4 415.9,630.7 417.3,631.0 418.7,631.3 420.2,631.5 421.6,631.7 423.0,631.8 424.5,631.9 425.9,632.0 427.3,632.1 428.8,632.2 430.2,632.3 431.7,632.4 433.1,632.5 434.5,632.6 436.0,632.8 437.4,633.0 438.8,633.3 440.3,633.6 441.7,634.0 443.1,634.5 444.6,635.0 446.0,635.7 447.4,636.8 448.9,638.1 450.3,639.9 451.7,642.3 453.2,645.4 454.6,648.9 456.0,652.4 459.0,613.5 460.0,529.0 461.6,450.0 463.0,390.5 464.9,347.0 466.0,314.8 467.0,288.7 468.9,266.7 469.7,251.8 471.3,241.3 472.9,227.0 475.3,245.0 476.0,269.4 476.7,227.0 477.7,294.3 478.4,227.0 479.3,300.7 480.0,238.0 481.0,227.0 482.5,254.0 483.5,238.0 485.0,276.6 485.7,304.2 486.5,227.0 488.0,255.8 489.0,238.0 490.0,227.0 491.3,282.7 492.5,238.0 493.5,227.0 495.4,255.8 495.4,227.0 497.0,238.0 499.0,238.0 501.8,250.0 501.8,268.6 502.6,295.0 505.0,308.7 505.8,251.8 508.2,264.6 509.0,283.9 510.6,300.0 513.4,309.5 514.9,309.5 516.3,309.6 517.7,309.6 519.2,309.8 520.6,309.9 522.0,311.0 523.5,314.7 524.9,319.8 526.3,325.2 527.8,330.4 529.2,336.1 530.6,342.1 532.1,348.1 533.5,353.9 535.0,359.4 536.4,364.9 537.8,370.3 539.3,375.4 540.7,380.5 542.1,385.6 543.6,390.5 545.0,395.4 546.4,400.1 547.9,404.6 549.3,408.9 550.7,412.8 552.2,416.5 553.6,420.0 555.0,423.5 556.5,426.8 557.9,430.3 559.3,433.9 560.8,437.5 562.2,441.2 563.6,445.0 565.1,448.7 566.5,452.4 567.9,456.0 569.4,459.5 570.8,462.9 572.3,466.3 573.7,469.6 575.1,472.8 576.6,476.0 578.0,479.2 579.4,482.3 580.9,485.4 582.3,488.4 583.7,491.4 585.2,494.5 586.6,497.5 588.0,500.6 589.5,503.6 590.9,506.5 592.3,509.3 593.8,511.9 595.2,514.3 596.6,516.4 598.1,518.0 599.5,519.4 600.9,520.8 602.4,522.4 603.8,524.3 605.3,526.6 606.7,529.3 608.1,532.1 609.6,535.0 611.0,537.7 612.4,540.0 613.9,542.2 615.3,544.2 616.7,546.2 618.2,547.8 619.6,549.0 621.0,549.7 622.5,550.1 623.9,550.3 625.3,550.4 626.8,550.4 628.6,535.0 629.7,491.5 630.8,426.0 632.5,363.8 633.9,318.0 635.7,286.0 637.0,264.0 638.3,249.0 639.7,245.6 641.1,251.1 642.6,257.8 644.0,265.5 645.4,274.5 646.9,285.8 648.3,299.3 649.7,312.7 651.2,326.2 652.6,339.1 654.0,351.3 655.5,362.8 656.9,372.9 658.3,381.1 659.8,388.3 661.2,394.7 662.6,400.5 664.1,406.1 665.5,411.7 666.9,417.0 668.4,422.1 669.8,427.0 671.2,431.7 672.7,436.3 674.1,440.7 675.6,445.0 677.0,449.3 678.4,453.6 679.9,457.8 681.3,462.0 682.7,466.1 684.2,470.2 685.6,474.2 687.0,478.1 688.5,481.9 689.9,485.6 691.3,489.2 692.8,492.7 694.2,496.0 695.6,499.2 697.1,502.2 698.5,505.0 699.9,507.6 701.4,510.1 702.8,512.4 704.2,514.7 705.7,516.8 707.1,518.9 708.5,521.0 710.0,523.1 711.4,525.2 712.9,527.3 714.3,529.6 715.7,531.8 717.2,534.1 718.6,536.4 720.0,538.6 721.5,540.9 722.9,543.2 724.3,545.4 725.8,547.6 727.2,549.8 728.6,552.0 730.1,554.1 731.5,556.2 732.9,558.2 734.4,560.1 735.8,562.0 737.2,563.8 738.7,565.6 740.1,567.4 741.5,569.0 743.0,570.7 744.4,572.3 745.9,573.9 747.3,575.4 748.7,576.9 750.2,578.4 751.6,579.8 753.0,581.2 754.5,582.6 755.9,584.0 757.3,585.4 758.8,586.7 760.2,588.0 761.6,589.3 763.1,590.4 764.5,591.6 765.9,592.6 767.4,593.6 768.8,594.5 770.2,595.2 771.7,595.9 773.1,596.5 774.5,597.0 776.0,597.6 777.4,598.2 778.9,598.8 780.3,599.6 781.7,600.4 783.2,601.2 784.6,602.1 786.0,603.0 787.5,604.0 788.9,604.9 790.3,605.9 791.8,606.8 793.2,607.8 794.6,608.7 796.1,609.5 797.5,610.4 798.9,611.2 800.4,612.1 801.8,612.9 803.2,613.7 804.7,614.5 806.1,615.3 807.5,616.1 809.0,616.9 810.4,617.7 811.8,618.5 813.3,619.3 814.7,620.1 816.2,620.8 817.6,621.6 819.0,622.4 820.5,623.1 821.9,623.9 823.3,624.6 824.8,625.4 826.2,626.1 827.6,626.9 829.1,627.6 830.5,628.3 831.9,629.0 833.4,629.8 834.8,630.5 836.2,631.2 837.7,631.9 839.1,632.6 840.5,633.3 842.0,634.0 843.4,634.7 844.8,635.3 846.3,636.0 847.7,636.7 849.2,637.4 850.6,638.1 852.0,638.8 853.5,639.5 854.9,640.3 856.3,641.2 857.8,642.0 859.2,642.9 860.6,643.7 862.1,644.4 863.5,645.0 864.9,645.3 866.4,645.5 867.8,645.0 869.2,643.7 870.7,641.8 872.1,639.9 873.5,637.6 875.0,635.0 876.4,632.5 877.8,630.6 879.3,629.2 880.7,628.0 882.1,627.0 883.6,626.2 885.0,625.7 886.5,625.3 887.9,625.0 889.3,625.0 890.8,625.0 892.2,625.0 893.6,625.1 895.1,625.2 896.5,625.4 897.9,625.7 899.4,626.1 900.8,626.7 902.2,627.4 903.7,628.3 905.1,630.2 906.5,633.1 908.0,636.8 909.4,641.8 911.6,650.0 913.0,608.0 915.0,521.8 916.0,438.8 918.0,381.5 919.0,341.7 920.7,308.7 921.9,283.0 924.2,231.0 924.9,245.6 925.8,262.6 927.6,298.6 928.8,322.0 930.6,314.0 932.3,232.2 934.6,246.0 935.7,283.0 938.0,326.0 938.7,226.5 940.3,231.0 941.5,246.0 943.8,276.7 944.9,204.0 947.2,231.0 948.8,203.4 949.5,239.0 951.8,252.5 954.0,218.8 954.8,261.7 956.5,197.6 957.6,241.4 961.0,217.0 963.4,219.5 965.2,208.0 966.8,200.0 970.3,190.3 973.7,204.6 974.9,195.0 980.6,185.0 983.0,193.0 985.4,190.5 986.9,188.4 988.3,191.7 989.8,186.6 991.2,189.9 992.6,188.6 994.1,186.6 995.5,190.9 996.9,187.8 998.4,191.4 999.8,187.8 1001.2,184.5 1002.7,185.4 1004.1,189.9 1005.5,186.7 1007.0,189.8 1008.4,194.2 1009.8,197.2 1011.3,194.5 1012.7,193.1 1014.1,197.8 1015.6,190.4 1017.0,196.8 1018.4,192.1 1019.9,190.8 1021.3,190.3 1022.7,191.6 1024.2,195.5 1025.6,190.2 1030.0,202.0 1031.0,212.6 1033.6,219.5 1037.0,234.5 1039.4,225.0 1039.4,247.0 1044.0,261.7 1044.7,277.8 1046.0,291.0 1048.6,246.0 1049.0,258.7 1051.6,277.0 1054.8,299.0 1057.2,285.9 1058.6,285.5 1060.1,285.1 1061.5,284.7 1062.9,284.5 1064.4,284.6 1065.8,285.1 1067.2,286.3 1068.7,288.2 1070.1,291.0 1071.5,295.0 1073.0,300.3 1074.4,306.4 1075.8,312.7 1077.3,318.5 1078.7,324.1 1080.1,329.7 1081.6,335.3 1083.0,341.0 1084.4,346.8 1085.9,352.8 1087.3,358.9 1088.7,365.1 1090.2,371.4 1091.6,377.6 1093.0,383.8"/>
<polyline fill="none" stroke="#ffff00" stroke-width="1" marker-start="url(#mT)" marker-mid="url(#mT)" marker-end="url(#mT)" points="61.5,606.1 62.9,606.1 64.4,605.9 65.8,606.0 67.2,605.6 68.7,605.6 70.1,605.7 71.5,606.2 73.0,605.9 74.4,605.8 75.8,606.1 77.3,606.0 78.7,605.9 80.2,606.5 81.6,606.6 83.0,606.4 84.5,607.0 85.9,607.2 87.3,607.8 88.8,608.0 90.2,607.9 91.6,608.8 93.1,608.3 94.5,608.8 95.9,609.2 97.4,608.8 98.8,609.2 100.2,608.9 101.7,609.5 103.1,609.7 104.5,609.6 106.0,609.9 107.4,609.4 108.8,609.8 110.3,609.8 111.7,609.8 113.1,609.7 114.6,610.1 116.0,610.2 117.5,609.9 118.9,610.1 120.3,609.6 121.8,610.3 123.2,610.4 124.6,610.8 126.1,610.8 127.5,610.5 128.9,610.7 130.4,611.2 131.8,611.0 133.2,612.0 134.7,612.3 136.1,612.7 137.5,613.0 139.0,613.8 140.4,613.2 141.8,613.4 143.3,613.5 144.7,614.0 146.1,613.3 147.6,613.7 149.0,613.8 150.5,614.1 151.9,614.1 153.3,614.2 154.8,613.6 156.2,613.8 157.6,613.7 159.1,614.2 160.5,614.3 161.9,613.6 163.4,613.6 164.8,613.7 166.2,613.7 167.7,613.9 169.1,614.0 170.5,613.7 172.0,613.5 173.4,613.9 174.8,613.8 176.3,614.0 177.7,614.4 179.1,614.2 180.6,614.0 182.0,614.1 183.4,614.2 184.9,613.7 186.3,614.5 187.8,614.5 189.2,614.7 190.6,614.7 192.1,614.4 193.5,614.5 194.9,614.4 196.4,615.0 197.8,614.6 199.2,614.7 200.7,615.0 202.1,615.1 203.5,615.4 205.0,615.3 206.4,615.3 207.8,615.6 209.3,615.7 210.7,616.1 212.1,615.9 213.6,616.8 215.0,616.7 216.4,616.4 217.9,616.6 219.3,616.8 220.8,617.0 222.2,616.9 223.6,617.7 225.1,617.9 226.5,617.6 227.9,617.8 229.4,617.5 230.8,617.7 232.2,618.1 233.7,618.1 235.1,618.8 236.5,618.3 238.0,618.3 239.4,619.3 240.8,619.1 242.3,618.9 243.7,619.4 245.1,619.1 246.6,619.7 248.0,620.2 249.4,620.3 250.9,620.3 252.3,620.0 253.7,620.3 255.2,620.3 256.6,621.0 258.1,620.9 259.5,621.3 260.9,621.0 262.4,621.1 263.8,621.8 265.2,622.1 266.7,622.1 268.1,622.2 269.5,622.4 271.0,622.5 272.4,622.2 273.8,622.6 275.3,622.6 276.7,622.5 278.1,622.7 279.6,623.0 281.0,623.2 282.4,623.8 283.9,624.2 285.3,623.9 286.7,624.5 288.2,624.7 289.6,624.9 291.1,624.5 292.5,624.5 293.9,624.7 295.4,624.9 296.8,625.0 298.2,625.6 299.7,626.0 301.1,626.1 302.5,625.9 304.0,626.3 305.4,626.5 306.8,626.1 308.3,626.7 309.7,627.1 311.1,627.1 312.6,627.3 314.0,627.1 315.4,627.0 316.9,627.7 318.3,627.4 319.7,628.0 321.2,628.2 322.6,627.8 324.1,628.0 325.5,628.6 326.9,628.5 328.4,628.1 329.8,628.1 331.2,628.2 332.7,629.0 334.1,629.0 335.5,628.5 337.0,629.2 338.4,629.4 339.8,629.2 341.3,629.0 342.7,629.2 344.1,628.9 345.6,628.9 347.0,629.8 348.4,629.6 349.9,629.5 351.3,630.0 352.7,629.6 354.2,630.0 355.6,630.1 357.0,629.6 358.5,629.7 359.9,629.8 361.4,629.8 362.8,630.2 364.2,630.0 365.7,630.2 367.1,630.0 368.5,630.8 370.0,630.4 371.4,630.6 372.8,630.8 374.3,631.1 375.7,630.8 377.1,631.3 378.6,631.1 380.0,631.2 381.4,631.3 382.9,631.0 384.3,631.5 385.7,631.4 387.2,631.4 388.6,632.3 390.0,631.8 391.5,632.3 392.9,632.6 394.4,632.6 395.8,632.5 397.2,632.8 398.7,633.0 400.1,633.3 401.5,632.8 403.0,633.3 404.4,633.1 405.8,633.2 407.3,633.8 408.7,633.6 410.1,633.8 411.6,634.0 413.0,634.3 414.4,634.0 415.9,634.2 417.3,634.2 418.7,634.3 420.2,634.6 421.6,634.5 423.0,634.6 424.5,634.7 425.9,635.2 427.3,635.1 428.8,635.3 430.2,635.5 431.7,635.0 433.1,635.3 434.5,635.8 436.0,635.8 437.4,635.2 438.8,635.3 440.3,635.7 441.7,635.4 443.1,635.6 444.6,635.6 446.0,636.2 447.4,636.4 448.9,636.5 450.3,635.9 451.7,636.5 453.2,636.5 454.6,636.1 456.0,636.8 457.5,637.0 458.9,636.3 460.3,637.1 461.8,636.6 463.2,636.7 464.7,637.2 466.1,637.1 467.5,636.5 469.0,636.8 470.4,636.9 471.8,636.8 473.3,636.7 474.7,636.8 476.1,637.2 477.6,636.6 479.0,637.0 480.4,636.9 481.9,636.6 483.3,636.8 484.7,637.1 486.2,636.9 487.6,636.5 489.0,637.3 490.5,637.0 491.9,637.1 493.3,636.3 494.8,636.3 496.2,636.0 497.6,636.6 499.1,636.0 500.5,635.8 502.0,636.0 503.4,636.3 504.8,636.1 506.3,635.5 507.7,635.2 509.1,635.8 510.6,635.3 512.0,635.3 513.4,634.6 514.9,634.5 516.3,634.9 517.7,634.5 519.2,634.0 520.6,634.6 522.0,634.2 523.5,634.2 524.9,633.4 526.3,634.0 527.8,633.1 529.2,633.7 530.6,633.1 532.1,632.9 533.5,632.9 535.0,633.1 536.4,632.4 537.8,632.1 539.3,632.3 540.7,631.9 542.1,631.7 543.6,631.6 545.0,631.4 546.4,631.4 547.9,631.4 549.3,631.3 550.7,631.6 552.2,631.0 553.6,631.1 555.0,630.8 556.5,630.8 557.9,630.5 559.3,630.6 560.8,630.3 562.2,630.9 563.6,630.7 565.1,630.3 566.5,630.6 567.9,630.9 569.4,630.2 570.8,630.8 572.3,630.4 573.7,630.4 575.1,630.7 576.6,630.3 578.0,630.4 579.4,630.5 580.9,630.8 582.3,630.2 583.7,630.6 585.2,630.4 586.6,630.3 588.0,630.1 589.5,630.0 590.9,629.7 592.3,629.7 593.8,629.6 595.2,630.1 596.6,629.6 598.1,629.4 599.5,629.3 600.9,629.9 602.4,629.8 603.8,629.5 605.3,629.0 606.7,628.8 608.1,628.7 609.6,628.6 611.0,628.0 612.4,627.9 613.9,627.4 615.3,627.6 616.7,627.2 618.2,626.4 619.6,625.6 621.0,625.9 622.5,624.8 623.9,624.5 625.3,623.7 626.8,623.6 628.2,623.3 629.6,622.9 631.1,622.1 632.5,622.0 633.9,621.1 635.4,620.8 636.8,620.2 638.2,620.0 639.7,619.2 641.1,618.7 642.6,618.5 644.0,618.0 645.4,617.8 646.9,617.3 648.3,617.0 649.7,616.5 651.2,616.1 652.6,615.7 654.0,614.8 655.5,614.3 656.9,614.4 658.3,613.1 659.8,613.1 661.2,612.5 662.6,611.5 664.1,611.8 665.5,611.5 666.9,610.9 668.4,610.8 669.8,610.6 671.2,609.8 672.7,610.0 674.1,609.9 675.6,610.1 677.0,609.9 678.4,609.9 679.9,609.6 681.3,609.8 682.7,609.5 684.2,609.4 685.6,608.9 687.0,608.6 688.5,608.6 689.9,608.7 691.3,608.4 692.8,609.0 694.2,608.6 695.6,608.6 697.1,608.5 698.5,608.4 699.9,608.2 701.4,607.6 702.8,608.3 704.2,608.1 705.7,607.8 707.1,607.8 708.5,607.8 710.0,607.2 711.4,607.8 712.9,607.2 714.3,607.0 715.7,607.1 717.2,607.5 718.6,607.0 720.0,607.4 721.5,607.6 722.9,607.1 724.3,607.0 725.8,607.0 727.2,607.2 728.6,607.3 730.1,607.1 731.5,607.1 732.9,606.6 734.4,606.7 735.8,606.8 737.2,607.2 738.7,606.9 740.1,607.1 741.5,606.7 743.0,606.7 744.4,607.0 745.9,607.4 747.3,607.4 748.7,607.5 750.2,607.2 751.6,607.4 753.0,607.4 754.5,607.5 755.9,607.3 757.3,608.0 758.8,607.5 760.2,608.3 761.6,608.3 763.1,607.6 764.5,608.1 765.9,608.5 767.4,608.7 768.8,608.4 770.2,608.3 771.7,608.4 773.1,609.1 774.5,608.6 776.0,609.0 777.4,608.8 778.9,609.2 780.3,609.7 781.7,609.2 783.2,609.9 784.6,609.8 786.0,610.3 787.5,610.4 788.9,610.1 790.3,610.9 791.8,610.8 793.2,610.6 794.6,610.7 796.1,611.4 797.5,611.6 798.9,611.6 800.4,611.7 801.8,612.1 803.2,612.2 804.7,612.9 806.1,612.3 807.5,613.2 809.0,613.4 810.4,612.9 811.8,613.8 813.3,613.7 814.7,614.0 816.2,613.6 817.6,613.8 819.0,613.9 820.5,614.6 821.9,614.3 823.3,614.2 824.8,614.4 826.2,614.3 827.6,614.2 829.1,614.4 830.5,615.1 831.9,614.7 833.4,615.4 834.8,614.9 836.2,615.0 837.7,615.3 839.1,615.1 840.5,615.3 842.0,615.9 843.4,615.9 844.8,616.0 846.3,615.9 847.7,616.2 849.2,616.3 850.6,616.0 852.0,616.3 853.5,615.8 854.9,616.5 856.3,616.3 857.8,616.7 859.2,616.7 860.6,616.4 862.1,616.3 863.5,617.2 864.9,616.6 866.4,617.0 867.8,617.0 869.2,617.1 870.7,617.6 872.1,617.9 873.5,617.4 875.0,617.9 876.4,617.7 877.8,618.1 879.3,618.1 880.7,618.0 882.1,618.2 883.6,618.4 885.0,619.1 886.5,618.9 887.9,618.8 889.3,619.6 890.8,619.9 892.2,619.5 893.6,619.4 895.1,619.6 896.5,619.6 897.9,620.0 899.4,619.9 900.8,620.1 902.2,620.3 903.7,620.7 905.1,621.0 906.5,621.0 908.0,620.8 909.4,620.9 910.8,621.0 912.3,621.0 913.7,621.0 915.1,620.8 916.6,621.1 918.0,621.8 919.5,621.1 920.9,621.5 922.3,621.6 923.8,621.9 925.2,621.4 926.6,621.5 928.1,621.5 929.5,621.6 930.9,621.7 932.4,622.2 933.8,622.1 935.2,622.2 936.7,621.5 938.1,621.5 939.5,622.1 941.0,622.3 942.4,621.9 943.8,622.1 945.3,621.5 946.7,621.9 948.1,622.4 949.6,622.3 951.0,622.3 952.4,622.4 953.9,621.7 955.3,621.4 956.8,621.3 958.2,621.4 959.6,621.4 961.1,621.3 962.5,620.8 963.9,620.4 965.4,620.2 966.8,619.5 968.2,619.2 969.7,618.3 971.1,618.5 972.5,617.5 974.0,617.7 975.4,617.0 976.8,616.2 978.3,615.5 979.7,615.1 981.1,615.0 982.6,614.5 984.0,613.5 985.4,613.0 986.9,612.9 988.3,612.5 989.8,611.9 991.2,611.3 992.6,611.2 994.1,610.3 995.5,610.1 996.9,609.9 998.4,610.0 999.8,609.3 1001.2,609.2 1002.7,608.4 1004.1,607.9 1005.5,607.5 1007.0,607.8 1008.4,607.2 1009.8,606.4 1011.3,605.8 1012.7,605.8 1014.1,605.6 1015.6,604.9 1017.0,604.3 1018.4,604.2 1019.9,604.0 1021.3,602.9 1022.7,602.2 1024.2,601.9 1025.6,601.4 1027.1,601.1 1028.5,599.9 1029.9,599.6 1031.4,598.7 1032.8,597.6 1034.2,596.5 1035.7,596.5 1037.1,595.5 1038.5,595.6 1040.0,594.7 1041.4,594.5 1042.8,594.8 1044.3,594.2 1045.7,594.7 1047.1,594.2 1048.6,593.8 1050.0,593.7 1051.4,593.7 1052.9,593.8 1054.3,593.9 1055.7,593.1 1057.2,593.2 1058.6,593.0 1060.1,593.6 1061.5,592.8 1062.9,592.6 1064.4,592.6 1065.8,592.8 1067.2,593.2 1068.7,593.1 1070.1,592.9 1071.5,593.1 1073.0,593.0 1074.4,592.5 1075.8,592.3 1077.3,592.9 1078.7,592.7 1080.1,592.0 1081.6,592.6 1083.0,592.3 1084.4,592.2 1085.9,592.1 1087.3,592.0 1088.7,591.8 1090.2,592.0 1091.6,592.0 1093.0,592.5"/>
<g font-family="Liberation Sans, Arial, sans-serif" font-size="17.6" fill="#000" stroke="#000" stroke-width="0.3" text-anchor="end" text-rendering="geometricPrecision">
<text x="45.3" y="136.6">60</text>
<text x="45.3" y="259.6">50</text>
<text x="45.3" y="382.6">40</text>
<text x="45.3" y="506.6">30</text>
<text x="45.3" y="629.6">20</text>
<text x="45.3" y="752.6">10</text>
<text x="45.3" y="875.6">0</text>
</g>
<g font-family="Liberation Sans, Arial, sans-serif" font-size="17.6" fill="#000" stroke="#000" stroke-width="0.3" text-rendering="geometricPrecision">
<text transform="translate(67.8 928) rotate(-90)" textLength="43" lengthAdjust="spacingAndGlyphs">21:00</text>
<text transform="translate(99.5 928) rotate(-90)" textLength="43" lengthAdjust="spacingAndGlyphs">21:44</text>
<text transform="translate(131.1 928) rotate(-90)" textLength="43" lengthAdjust="spacingAndGlyphs">22:28</text>
<text transform="translate(162.8 928) rotate(-90)" textLength="43" lengthAdjust="spacingAndGlyphs">23:12</text>
<text transform="translate(194.4 928) rotate(-90)" textLength="43" lengthAdjust="spacingAndGlyphs">00:06</text>
<text transform="translate(226.1 928) rotate(-90)" textLength="43" lengthAdjust="spacingAndGlyphs">00:50</text>
<text transform="translate(257.7 928) rotate(-90)" textLength="43" lengthAdjust="spacingAndGlyphs">01:34</text>
<text transform="translate(289.4 928) rotate(-90)" textLength="43" lengthAdjust="spacingAndGlyphs">02:18</text>
<text transform="translate(321.0 928) rotate(-90)" textLength="43" lengthAdjust="spacingAndGlyphs">03:02</text>
<text transform="translate(352.7 928) rotate(-90)" textLength="43" lengthAdjust="spacingAndGlyphs">03:46</text>
<text transform="translate(384.4 928) rotate(-90)" textLength="43" lengthAdjust="spacingAndGlyphs">04:31</text>
<text transform="translate(416.0 928) rotate(-90)" textLength="43" lengthAdjust="spacingAndGlyphs">05:15</text>
<text transform="translate(447.7 928) rotate(-90)" textLength="43" lengthAdjust="spacingAndGlyphs">05:59</text>
<text transform="translate(479.3 928) rotate(-90)" textLength="43" lengthAdjust="spacingAndGlyphs">06:43</text>
<text transform="translate(511.0 928) rotate(-90)" textLength="43" lengthAdjust="spacingAndGlyphs">07:27</text>
<text transform="translate(542.6 928) rotate(-90)" textLength="43" lengthAdjust="spacingAndGlyphs">08:11</text>
<text transform="translate(574.3 928) rotate(-90)" textLength="43" lengthAdjust="spacingAndGlyphs">08:55</text>
<text transform="translate(606.0 928) rotate(-90)" textLength="43" lengthAdjust="spacingAndGlyphs">09:39</text>
<text transform="translate(637.6 928) rotate(-90)" textLength="43" lengthAdjust="spacingAndGlyphs">10:23</text>
<text transform="translate(669.3 928) rotate(-90)" textLength="43" lengthAdjust="spacingAndGlyphs">11:07</text>
<text transform="translate(700.9 928) rotate(-90)" textLength="43" lengthAdjust="spacingAndGlyphs">11:51</text>
<text transform="translate(732.6 928) rotate(-90)" textLength="43" lengthAdjust="spacingAndGlyphs">12:35</text>
<text transform="translate(764.2 928) rotate(-90)" textLength="43" lengthAdjust="spacingAndGlyphs">13:19</text>
<text transform="translate(795.9 928) rotate(-90)" textLength="43" lengthAdjust="spacingAndGlyphs">14:03</text>
<text transform="translate(827.5 928) rotate(-90)" textLength="43" lengthAdjust="spacingAndGlyphs">14:47</text>
<text transform="translate(859.2 928) rotate(-90)" textLength="43" lengthAdjust="spacingAndGlyphs">15:31</text>
<text transform="translate(890.9 928) rotate(-90)" textLength="43" lengthAdjust="spacingAndGlyphs">16:15</text>
<text transform="translate(922.5 928) rotate(-90)" textLength="43" lengthAdjust="spacingAndGlyphs">16:59</text>
<text transform="translate(954.2 928) rotate(-90)" textLength="43" lengthAdjust="spacingAndGlyphs">17:43</text>
<text transform="translate(985.8 928) rotate(-90)" textLength="43" lengthAdjust="spacingAndGlyphs">18:28</text>
<text transform="translate(1017.5 928) rotate(-90)" textLength="43" lengthAdjust="spacingAndGlyphs">19:12</text>
<text transform="translate(1049.1 928) rotate(-90)" textLength="43" lengthAdjust="spacingAndGlyphs">19:56</text>
<text transform="translate(1080.8 928) rotate(-90)" textLength="43" lengthAdjust="spacingAndGlyphs">20:40</text>
</g>
<rect x="1110.5" y="456.5" width="136" height="87" fill="#fff" stroke="#000" stroke-width="1"/>
<rect x="1116" y="471" width="38" height="1" fill="#000080"/>
<rect x="1116" y="500" width="38" height="1" fill="#ff00ff"/>
<rect x="1116" y="529" width="38" height="1" fill="#ffff00"/>
<path d="M1135.5 466.5l4.5 5-4.5 5-4.5-5z" fill="#000080"/>
<rect x="1132" y="497" width="7" height="7" fill="#ff00ff"/>
<path d="M1135.5 524.5l4.5 8h-9z" fill="#ffff00"/>
<g font-family="Liberation Sans, Arial, sans-serif" font-size="17.6" fill="#000" stroke="#000" stroke-width="0.3" text-rendering="geometricPrecision">
<text x="1160" y="477">Т Външна</text><text x="1160" y="506">Т вода</text><text x="1160" y="535">Т Хол</text></g>
<rect x="478.5" y="208.5" width="52" height="15" fill="#ffffe1" stroke="#000"/>
<text x="481.5" y="220" font-family="Liberation Sans, Arial, sans-serif" font-size="10.8" fill="#000">Plot Area</text>
<rect x="6" y="98" width="6" height="6" fill="#000"/>
<rect x="626" y="98" width="6" height="6" fill="#000"/>
<rect x="1249" y="98" width="6" height="6" fill="#000"/>
<rect x="6" y="520" width="6" height="6" fill="#000"/>
<rect x="1249" y="520" width="6" height="6" fill="#000"/>
<rect x="6" y="943" width="6" height="6" fill="#000"/>
<rect x="626" y="943" width="6" height="6" fill="#000"/>
<rect x="1249" y="943" width="6" height="6" fill="#000"/>
</svg>
<!-- vertical scrollbar -->
<div id="vs" class="abs"></div>
<div class="abs chk" style="left:1262px;top:109px;width:16px;height:832px"></div>
<div class="abs btn3" style="left:1262px;top:94px;width:16px;height:15px"><div class="abs" style="left:3px;top:4px;width:0;height:0;border-left:4px solid transparent;border-right:4px solid transparent;border-bottom:4px solid #000"></div></div>
<div class="abs btn3" style="left:1262px;top:132px;width:16px;height:774px"></div>
<div class="abs btn3" style="left:1262px;top:941px;width:16px;height:16px"><div class="abs" style="left:3px;top:5px;width:0;height:0;border-left:4px solid transparent;border-right:4px solid transparent;border-top:4px solid #000"></div></div>
<!-- tabs row -->
<div id="tabs" class="abs"></div>
<div class="abs" style="left:0;top:957px;width:2px;height:16px;background:#aca899"></div>
<div class="abs btn3" style="left:2px;top:957px;width:16px;height:16px;border-color:#fff #aca899 #aca899 #fff"><svg class="abs" style="left:2px;top:3px" width="10" height="9" viewBox="0 0 10 9"><rect x="1" y="0" width="1.500" height="9"/><path d="M8 0v9l-5-4.500z"/></svg></div>
<div class="abs btn3" style="left:18px;top:957px;width:16px;height:16px;border-color:#fff #aca899 #aca899 #fff"><svg class="abs" style="left:2px;top:3px" width="10" height="9" viewBox="0 0 10 9"><path d="M7 0v9l-5-4.500z"/></svg></div>
<div class="abs btn3" style="left:34px;top:957px;width:16px;height:16px;border-color:#fff #aca899 #aca899 #fff"><svg class="abs" style="left:2px;top:3px" width="10" height="9" viewBox="0 0 10 9"><path d="M3 0v9l5-4.500z"/></svg></div>
<div class="abs btn3" style="left:50px;top:957px;width:16px;height:16px;border-color:#fff #aca899 #aca899 #fff"><svg class="abs" style="left:2px;top:3px" width="10" height="9" viewBox="0 0 10 9"><path d="M2 0v9l5-4.500z"/><rect x="7.500" y="0" width="1.500" height="9"/></svg></div>
<svg class="abs" style="left:64px;top:957px" width="140" height="16" viewBox="0 0 140 16"><path d="M2 0h62l-6 15h-50z" fill="#fff"/><path d="M2 0l6 15h50l6-15" fill="none" stroke="#000"/><path d="M58 15h69l6-15" fill="none" stroke="#000"/><path d="M64 0h70" stroke="#000" /><path d="M57 15h70" stroke="#fff"/></svg>
<div class="abs" style="left:76px;top:959px;font:bold 13.2px/14px 'Liberation Sans',Arial,sans-serif;letter-spacing:-.1px">Chart1</div>
<div class="abs" style="left:132px;top:959px;font:12.8px/14px 'Liberation Sans',Arial,sans-serif;letter-spacing:-.2px">TempLog</div>
<!-- horizontal scrollbar -->
<div class="abs" style="left:762px;top:957px;width:2px;height:16px;background:#000"></div>
<div class="abs chk" style="left:780px;top:958px;width:466px;height:15px"></div>
<div class="abs btn3" style="left:764px;top:958px;width:16px;height:15px"><div class="abs" style="left:4px;top:3px;width:0;height:0;border-top:4px solid transparent;border-bottom:4px solid transparent;border-right:4px solid #000"></div></div>
<div class="abs btn3" style="left:790px;top:958px;width:441px;height:15px"></div>
<div class="abs btn3" style="left:1246px;top:958px;width:16px;height:15px"><div class="abs" style="left:6px;top:3px;width:0;height:0;border-top:4px solid transparent;border-bottom:4px solid transparent;border-left:4px solid #000"></div></div>
<div class="abs" style="left:1262px;top:957px;width:18px;height:16px;background:#ece9d8"></div>
<!-- status -->
<div id="status" class="abs"></div>
<div class="abs" style="left:6px;top:978px;font:12px/14px 'Liberation Sans',Arial,sans-serif">Ready</div>
<div class="abs" style="left:910px;top:976px;width:2px;height:17px;border-left:1px solid #aca899;border-right:1px solid #fff"></div>
<div class="abs pane" style="left:918px;width:33px"></div>
<div class="abs pane" style="left:954px;width:129px"></div>
<div class="abs pane" style="left:1086px;width:27px"></div>
<div class="abs pane" style="left:1116px;width:35px"></div>
<div class="abs pane" style="left:1153px;width:31px;font:11.5px/13px 'Liberation Sans',Arial,sans-serif;padding-left:1px">NUM</div>
<div class="abs pane" style="left:1186px;width:32px"></div>
<div class="abs pane" style="left:1220px;width:29px"></div>
<div class="abs pane" style="left:1251px;width:23px"></div>
<div id="task" class="abs"></div>
<div class="abs" style="left:0;top:993px;width:94px;height:5px;background:linear-gradient(to bottom,#7cc47c 0,#4aa84c 35%,#3d9a41 100%)"></div>
<div class="abs" style="left:1170px;top:993px;width:110px;height:5px;background:linear-gradient(to bottom,#4aa6ea 0,#1792e8 35%,#1290e6 100%);border-left:1px solid #0a4fb0"></div>
</body></html>
